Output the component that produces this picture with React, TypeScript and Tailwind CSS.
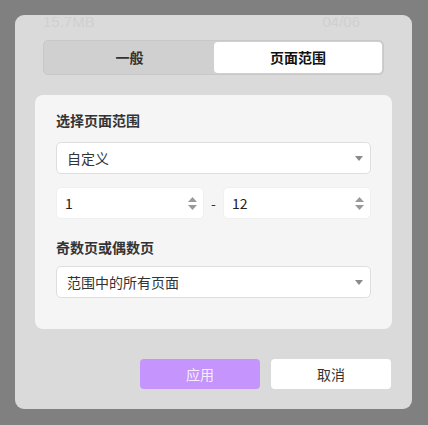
import type { ReactNode } from "react";

const font = { fontFamily: '"Noto Sans CJK SC", "Noto Sans", sans-serif' };
const latin = { fontFamily: '"Liberation Sans", Arial, sans-serif' };

function Caret() {
  return (
    <svg width="8" height="5" viewBox="0 0 8 5" className="shrink-0">
      <path d="M0 0h8L4 5z" fill="#8a8a8a" />
    </svg>
  );
}

function Spinner() {
  return (
    <div className="flex flex-col gap-[3px]">
      <svg width="9" height="5" viewBox="0 0 9 5">
        <path d="M0 5h9L4.5 0z" fill="#9a9a9a" />
      </svg>
      <svg width="9" height="5" viewBox="0 0 9 5">
        <path d="M0 0h9L4.5 5z" fill="#9a9a9a" />
      </svg>
    </div>
  );
}

function Select({ value }: { value: string }) {
  return (
    <div className="flex h-[32px] items-center justify-between rounded-[5px] border border-[#dedede] bg-white pl-[10px] pr-[7px] text-[14px] text-[#333]">
      <span>{value}</span>
      <Caret />
    </div>
  );
}

function NumberInput({ value }: { value: string }) {
  return (
    <div className="flex h-[32px] flex-1 items-center justify-between rounded-[5px] border border-[#f0f0f0] bg-white pl-[8px] pr-[6px] text-[14px] text-[#222]">
      <span>{value}</span>
      <Spinner />
    </div>
  );
}

function Label({ children }: { children: ReactNode }) {
  return <div className="text-[14px] font-bold leading-[18px] text-[#333]">{children}</div>;
}

export default function App() {
  return (
    <div className="h-[425px] w-[428px] bg-[#808080] pl-[15px] pt-[15px]" style={font}>
      <div className="flex h-[394px] w-[397px] flex-col rounded-[9px] bg-[#dadada]">
        {/* faint status text showing through from behind */}
        <div className="flex h-[25px] shrink-0 justify-between px-[28px] pr-[52px] text-[15px] leading-[14px] text-[#d0d0d0]" style={latin}>
          <span>15.7MB</span>
          <span>04/06</span>
        </div>

        <div className="mx-[28px] flex h-[35px] rounded-[5px] border border-[#c8c8c8] bg-[#d0d0d0] p-[1px]">
          <div className="flex flex-1 items-center justify-center text-[14px] font-bold text-[#333]">一般</div>
          <div className="flex w-[168px] items-center justify-center rounded-[4px] bg-white text-[14px] font-bold text-[#111]">页面范围</div>
        </div>

        <div className="mx-[20px] mt-[20px] flex h-[234px] flex-col rounded-[8px] bg-[#f5f5f5] px-[21px] pt-[16px]">
          <Label>选择页面范围</Label>
          <div className="mt-[13px]">
            <Select value="自定义" />
          </div>
          <div className="mt-[13px] flex items-center gap-[6px]">
            <NumberInput value="1" />
            <span className="w-[7px] text-center text-[14px] text-[#333]">-</span>
            <NumberInput value="12" />
          </div>
          <div className="mt-[19px]">
            <Label>奇数页或偶数页</Label>
          </div>
          <div className="mt-[10px]">
            <Select value="范围中的所有页面" />
          </div>
        </div>

        <div className="mx-[21px] mt-[30px] flex justify-end gap-[11px]">
          <button className="h-[30px] w-[120px] rounded-[4px] bg-[#c594fc] text-[14px] text-[#f6eeff]">应用</button>
          <button className="h-[30px] w-[120px] rounded-[4px] bg-white text-[14px] text-[#333]">取消</button>
        </div>
      </div>
    </div>
  );
}
